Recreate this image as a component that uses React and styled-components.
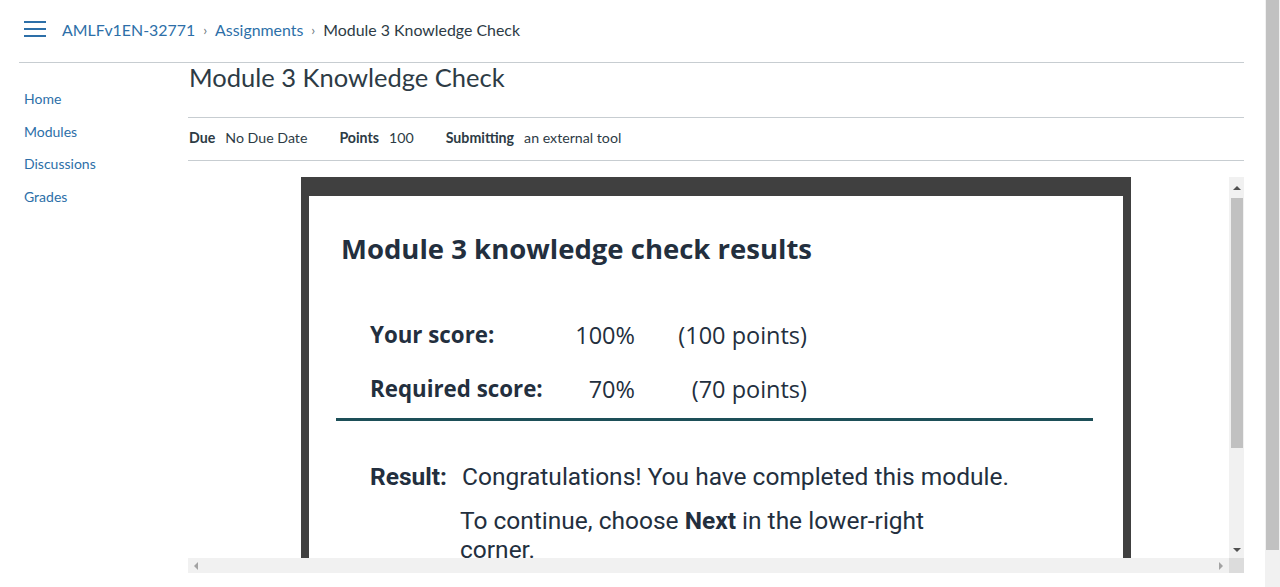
import React from "react";
import styled, { createGlobalStyle } from "styled-components";

const GlobalStyle = createGlobalStyle`
  html, body {
    margin: 0;
    padding: 0;
    background: #fff;
    font-family: Lato, "Open Sans", sans-serif;
    color: #2d3b45;
    overflow: hidden;
  }
`;

const Window = styled.div`
  display: flex;
  height: 587px;
  overflow: hidden;
`;

const Page = styled.div`
  flex: 1;
  min-width: 0;
`;

const PageBar = styled.div`
  width: 15px;
  flex-shrink: 0;
  background: #f1f1f1;
  display: flex;
  justify-content: center;
`;

const PageThumb = styled.div`
  width: 13px;
  height: 550px;
  background: #c1c1c1;
`;

const Header = styled.header`
  margin: 0 21px 0 19px;
  height: 63px;
  display: flex;
  align-items: center;
  padding: 0 0 4px 5px;
  box-sizing: border-box;
  border-bottom: 1px solid #c7cdd1;
  font-size: 15.9px;
`;

const Burger = styled.span`
  display: flex;
  flex-direction: column;
  gap: 5px;
  width: 22px;
  margin-right: 16px;

  span {
    height: 2px;
    background: #2d6fa8;
  }
`;

const Crumb = styled.a`
  color: ${(p) => (p.$current ? "#2d3b45" : "#2d6fa8")};
  text-decoration: none;
`;

const Sep = styled.span`
  color: #6b7780;
  font-size: 14px;
  margin: 0 8px;
`;

const Body = styled.div`
  display: flex;
  margin-right: 21px;
`;

const Nav = styled.nav`
  width: 164px;
  padding: 20px 0 0 24px;
  flex-shrink: 0;
`;

const NavLink = styled.a`
  display: block;
  height: 32.5px;
  line-height: 32px;
  font-size: 14px;
  color: #2d6fa8;
  text-decoration: none;
`;

const Main = styled.main`
  flex: 1;
`;

const Title = styled.h1`
  margin: 0;
  padding: 0 0 26px 1px;
  font-size: 25.5px;
  line-height: 28px;
  font-weight: 400;
  color: #2d3b45;
  border-bottom: 1px solid #c7cdd1;
`;

const Details = styled.div`
  display: flex;
  align-items: center;
  height: 43px;
  box-sizing: border-box;
  padding: 0 0 3px 1px;
  border-bottom: 1px solid #c7cdd1;
  font-size: 14.2px;
  gap: 32px;
`;

const Detail = styled.span`
  b {
    font-weight: 700;
    margin-right: 10px;
  }
`;

const Tool = styled.div`
  margin-top: 16px;
  height: 396px;
  display: grid;
  grid-template-columns: 1fr 15px;
  grid-template-rows: 1fr 15px;
`;

const Viewport = styled.div`
  overflow: hidden;
`;

const VBar = styled.div`
  background: #f1f1f1;
  display: flex;
  flex-direction: column;
  align-items: center;
`;

const HBar = styled.div`
  background: #f1f1f1;
  display: flex;
  align-items: center;
  justify-content: space-between;
  padding: 0 6px;
`;

const Corner = styled.div`
  background: #dcdcdc;
`;

const ArrowBox = styled.div`
  height: ${(p) => p.$h || 15}px;
  display: flex;
  align-items: center;
  justify-content: center;
`;

const Tri = styled.span`
  width: 0;
  height: 0;
  border: 4px solid transparent;
  ${(p) => p.$dir === "up" && "border-bottom: 4px solid #505050; border-top: 0;"}
  ${(p) => p.$dir === "down" && "border-top: 4px solid #505050; border-bottom: 0;"}
  ${(p) => p.$dir === "left" && "border-right: 4px solid #a3a3a3; border-left: 0;"}
  ${(p) => p.$dir === "right" && "border-left: 4px solid #a3a3a3; border-right: 0;"}
`;

const Thumb = styled.div`
  width: 12px;
  height: 250px;
  background: #c1c1c1;
`;

const Spacer = styled.div`
  flex: 1;
`;

const Frame = styled.div`
  margin-left: 113px;
  width: 814px;
  background: #404040;
  padding: 19px 8px 0 8px;
`;

const Card = styled.div`
  background: #fff;
  padding: 36px 30px 40px 27px;
  color: #232f3e;
`;

const Heading = styled.h2`
  margin: 0 0 42px 5px;
  font-family: "Open Sans", sans-serif;
  font-size: 27.5px;
  line-height: 34px;
  font-weight: 700;
  color: #232f3e;
`;

const Scores = styled.div`
  display: grid;
  grid-template-columns: 190px 75px 172px;
  margin-left: 34px;
  font-family: "Open Sans", sans-serif;
  line-height: 54px;
`;

const Cell = styled.div`
  text-align: ${(p) => (p.$label ? "left" : "right")};
  font-weight: ${(p) => (p.$label ? 700 : 400)};
  font-size: ${(p) => (p.$label ? 22.3 : 23.5)}px;
`;

const Rule = styled.hr`
  margin: 2px 0 0;
  border: 0;
  height: 3px;
  background: #1d4f58;
`;

const Result = styled.div`
  display: grid;
  grid-template-columns: 92px 1fr;
  margin: 41px 0 0 34px;
  font-family: Roboto, sans-serif;
  font-size: 24.5px;
  line-height: 30px;
`;

const ResultLabel = styled.span`
  font-weight: 700;
`;

const Para = styled.p`
  margin: 0 0 14px;
  max-width: ${(p) => p.$max || "none"};
  margin-left: ${(p) => p.$shift || 0}px;
  line-height: ${(p) => p.$lh || 30}px;

  b {
    font-weight: 700;
  }
`;

export default function App() {
  return (
    <Window>
      <GlobalStyle />
      <Page>
        <Header>
          <Burger>
            <span />
            <span />
            <span />
          </Burger>
          <Crumb href="#">AMLFv1EN-32771</Crumb>
          <Sep>›</Sep>
          <Crumb href="#">Assignments</Crumb>
          <Sep>›</Sep>
          <Crumb $current>Module 3 Knowledge Check</Crumb>
        </Header>
        <Body>
          <Nav>
            <NavLink href="#">Home</NavLink>
            <NavLink href="#">Modules</NavLink>
            <NavLink href="#">Discussions</NavLink>
            <NavLink href="#">Grades</NavLink>
          </Nav>
          <Main>
            <Title>Module 3 Knowledge Check</Title>
            <Details>
              <Detail>
                <b>Due</b>No Due Date
              </Detail>
              <Detail>
                <b>Points</b>100
              </Detail>
              <Detail>
                <b>Submitting</b>an external tool
              </Detail>
            </Details>
            <Tool>
              <Viewport>
                <Frame>
                  <Card>
                    <Heading>Module 3 knowledge check results</Heading>
                    <Scores>
                      <Cell $label>Your score:</Cell>
                      <Cell>100%</Cell>
                      <Cell>(100 points)</Cell>
                      <Cell $label>Required score:</Cell>
                      <Cell>70%</Cell>
                      <Cell>(70 points)</Cell>
                    </Scores>
                    <Rule />
                    <Result>
                      <ResultLabel>Result:</ResultLabel>
                      <div>
                        <Para>Congratulations! You have completed this module.</Para>
                        <Para $max="500px" $shift={-2} $lh={29}>
                          To continue, choose <b>Next</b> in the lower-right corner.
                        </Para>
                      </div>
                    </Result>
                  </Card>
                </Frame>
              </Viewport>
              <VBar>
                <ArrowBox $h={21}>
                  <Tri $dir="up" />
                </ArrowBox>
                <Thumb />
                <Spacer />
                <ArrowBox $h={17}>
                  <Tri $dir="down" />
                </ArrowBox>
              </VBar>
              <HBar>
                <Tri $dir="left" />
                <Tri $dir="right" />
              </HBar>
              <Corner />
            </Tool>
          </Main>
        </Body>
      </Page>
      <PageBar>
        <PageThumb />
      </PageBar>
    </Window>
  );
}
